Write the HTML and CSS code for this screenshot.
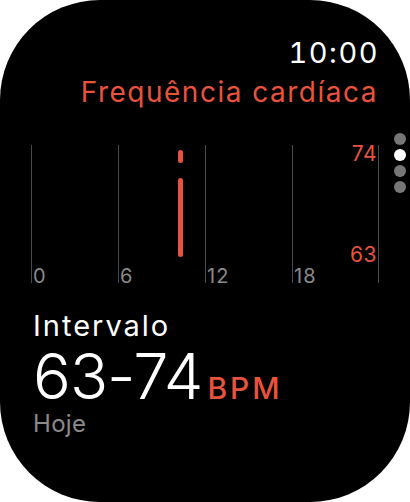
FILE: index.html
```html
<!DOCTYPE html>
<html>
    <head>
        <meta charset="utf-8">
        <link rel="stylesheet" href="styles.css">
    </head>
    <body>
        <div class="screen">

            <div class="header">
                <div class="clock">10:00</div>
                <div class="title">Frequência cardíaca</div>
            </div>

            <!-- page indicator -->
            <div class="pageDots">
                <span class="dot"></span>
                <span class="dot active"></span>
                <span class="dot"></span>
                <span class="dot"></span>
            </div>

            <div class="chart">
                <div class="col"><span class="hour">0</span></div>
                <div class="col"><span class="hour">6</span></div>
                <div class="col"><span class="hour">12</span></div>
                <div class="col last">
                    <span class="range">74</span>
                    <span class="range">63</span>
                    <span class="hour">18</span>
                </div>

                <!-- readings at ~10h -->
                <div class="reading" style="left: 147px; top: 5px; height: 13px;"></div>
                <div class="reading" style="left: 147px; top: 33px; height: 79px;"></div>
            </div>

            <div class="summary">
                <div class="label">Intervalo</div>
                <div class="value">63-74<span class="unit">BPM</span></div>
                <div class="when">Hoje</div>
            </div>

        </div>
    </body>
</html>
```

FILE: styles.css
```css
body {
    margin: 0;
    background-color: white;
    font-family: Inter, Roboto, sans-serif;
}

.screen {
    position: relative;
    width: 410px;
    height: 502px;
    background-color: black;
    border-radius: 100px;
    overflow: hidden;
}

.header {
    text-align: right;
    padding: 38px 32px 0 0;
}

.clock {
    margin-right: -1px;
    color: white;
    font-size: 29px;
    line-height: 29px;
    font-variant-numeric: tabular-nums;
    letter-spacing: 1.5px;
}

.title {
    margin-top: 11px;
    color: #e8533e;
    font-size: 28px;
    line-height: 28px;
    letter-spacing: 1.5px;
}

.pageDots {
    position: absolute;
    top: 133px;
    right: 4px;
    display: flex;
    flex-direction: column;
    gap: 4px;
}

.dot {
    width: 12px;
    height: 12px;
    border-radius: 50%;
    background-color: #777;
}

.dot.active {
    background-color: white;
}

.chart {
    position: relative;
    display: grid;
    grid-template-columns: 87px 87px 87px 87px;
    width: 348px;
    height: 138px;
    margin: 39px 0 0 31px;
}

.col {
    display: flex;
    flex-direction: column;
    justify-content: flex-end;
    border-left: 1px solid #4a4a4a;
    padding-left: 1px;
}

.col.last {
    border-right: 1px solid #4a4a4a;
}

.hour {
    color: #8a8a8a;
    font-size: 20px;
    line-height: 14px;
    letter-spacing: 1px;
}

.range {
    align-self: flex-end;
    color: #e8533e;
    font-size: 21px;
    line-height: 16px;
    letter-spacing: 0.5px;
    padding-right: 1px;
}

.range:first-child {
    margin-top: 1px;
    margin-bottom: auto;
}

.range + .range {
    margin-bottom: 6px;
}

.reading {
    position: absolute;
    width: 5px;
    border-radius: 3px;
    background-color: #e8533e;
}

.summary {
    padding: 28px 0 0 33px;
}

.label {
    color: white;
    font-size: 29px;
    line-height: 29px;
    letter-spacing: 2px;
}

.value {
    margin-top: 5px;
    color: white;
    font-size: 63px;
    font-weight: 300;
    line-height: 63px;
    letter-spacing: -1px;
}

.unit {
    margin-left: 5px;
    color: #e8533e;
    font-size: 30px;
    font-weight: 500;
    line-height: 1;
    letter-spacing: 3px;
}

.when {
    margin-top: 4px;
    color: #8a8a8a;
    font-size: 24px;
    line-height: 24px;
    letter-spacing: 0.3px;
}
```
